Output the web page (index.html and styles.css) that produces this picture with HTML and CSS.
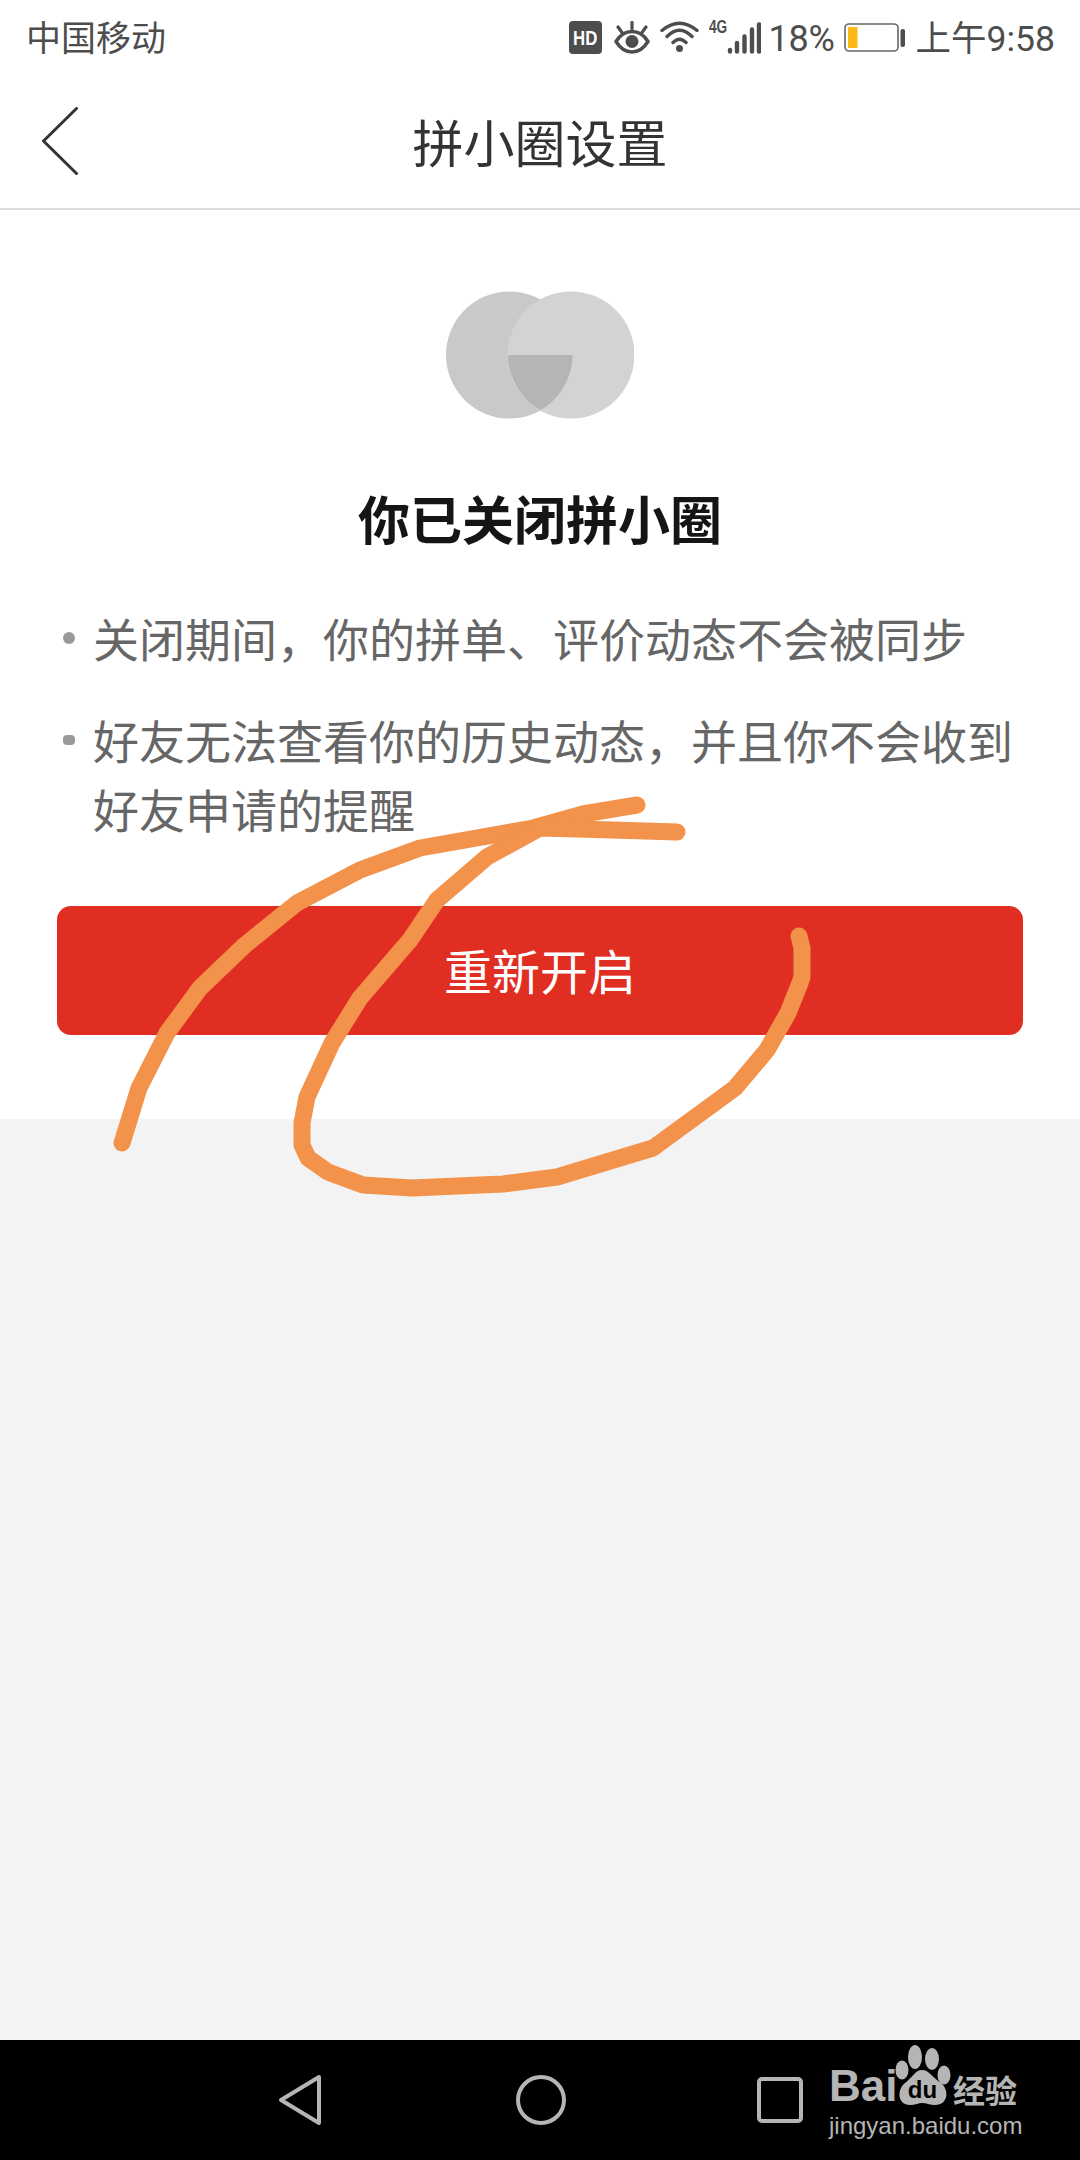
FILE: index.html
```html
<!DOCTYPE html>
<html lang="zh-CN">
<head>
<meta charset="utf-8">
<title>拼小圈设置</title>
<link rel="stylesheet" href="styles.css">
</head>
<body>
<div class="page">
  <header class="status">
    <span class="carrier">中国移动</span>
    <div class="status-right">
      <span class="hd"><span class="hd-text">HD</span></span>
      <svg class="eye" width="36" height="33" viewBox="0 0 36 33">
        <path d="M2 20.500C6 14 11 10.500 18 10.500S30 14 34 20.500C30 27 25 31 18 31S6 27 2 20.500Z" fill="none" stroke="#4d4d4d" stroke-width="3.400"/>
        <circle cx="18" cy="20.500" r="6.500" fill="#4d4d4d"/>
        <path d="M18 1.500v6.500M4 6l4 5.500M32 6l-4 5.500" fill="none" stroke="#4d4d4d" stroke-width="3.200" stroke-linecap="round"/>
      </svg>
      <svg class="wifi" width="39" height="32" viewBox="0 0 39 32">
        <path d="M2 9.500Q19.500 -5 37 9.500M7 15.500Q19.500 3 32 15.500M13 21.500Q19.500 15 26 21.500" fill="none" stroke="#4d4d4d" stroke-width="3.400" stroke-linecap="round"/>
        <circle cx="19.500" cy="27.500" r="3.500" fill="#4d4d4d"/>
      </svg>
      <div class="net">
        <span class="g4">4G</span>
        <svg class="bars" width="34" height="32" viewBox="0 0 34 32">
          <path d="M3 28v1.500M10 21v8.500M17.500 14.500v15M25 7.500v22M32 2.500v27" fill="none" stroke="#4d4d4d" stroke-width="4.400" stroke-linecap="round"/>
        </svg>
      </div>
      <span class="pct">18%</span>
      <svg class="batt" width="61" height="29" viewBox="0 0 61 29">
        <rect x="1" y="1" width="53" height="27" rx="4" fill="none" stroke="#666" stroke-width="1.600"/>
        <rect x="4" y="4" width="9.500" height="21" fill="#fdb913"/>
        <rect x="56.500" y="6" width="4.500" height="18" rx="2" fill="#4d4d4d"/>
      </svg>
      <span class="time">上午9:58</span>
    </div>
  </header>
  <nav class="nav">
    <svg class="back" width="36" height="68" viewBox="0 0 36 68">
      <path d="M34.500 1.500L1.500 34L34.500 66.500" fill="none" stroke="#333" stroke-width="3" stroke-linecap="round" stroke-linejoin="round"/>
    </svg>
    <h1 class="nav-title">拼小圈设置</h1>
  </nav>
  <main class="card">
    <svg class="logo" width="188" height="130" viewBox="0 0 188 130">
      <circle cx="63.500" cy="65" r="63.500" fill="#c9c9c9"/>
      <circle cx="125" cy="65" r="63.500" fill="#d3d3d3"/>
      <path d="M62 65H126.500C126.500 88 113 110 94.300 120C76 110 62 88 62 65Z" fill="#b5b5b5"/>
    </svg>
    <h2 class="headline">你已关闭拼小圈</h2>
    <ul class="notes">
      <li class="note"><i class="dot"></i><span>关闭期间，你的拼单、评价动态不会被同步</span></li>
      <li class="note"><i class="dot dot-flat"></i><span>好友无法查看你的历史动态，并且你不会收到好友申请的提醒</span></li>
    </ul>
    <button class="cta">重新开启</button>
  </main>
  <div class="filler"></div>
  <footer class="sysnav">
    <svg class="sys-back" width="44" height="52" viewBox="0 0 44 52">
      <path d="M41 3L3 26L41 49Z" fill="none" stroke="#b5b5b5" stroke-width="4" stroke-linejoin="round"/>
    </svg>
    <svg class="sys-home" width="50" height="50" viewBox="0 0 50 50">
      <circle cx="25" cy="25" r="23" fill="none" stroke="#b5b5b5" stroke-width="4"/>
    </svg>
    <svg class="sys-recent" width="46" height="46" viewBox="0 0 46 46">
      <rect x="2" y="2" width="42" height="42" rx="3" fill="none" stroke="#b5b5b5" stroke-width="4"/>
    </svg>
  </footer>
</div>
<svg class="scribble" width="1080" height="2160" viewBox="0 0 1080 2160">
  <path d="M122 1143L139 1088L167 1033L200 988L245 945L297 903L360 870L420 848L533 828L583 814L637 805" />
  <path d="M677 832L612 830L540 828L487 857L437 900L410 940L360 998L332 1043L307 1097L302 1123L302 1145L308 1158L328 1172L363 1185L412 1188L503 1184L557 1177L653 1148L735 1088L767 1050L788 1013L800 983L802 977L802 948L799 936" />
</svg>
<div class="mark">
  <div class="mark-top">
    <span class="mark-bai">Bai</span>
    <svg class="mark-paw" width="56" height="61" viewBox="0 0 56 61">
      <ellipse cx="20" cy="12" rx="7" ry="12" fill="#b5b5b5"/>
      <ellipse cx="37" cy="14" rx="7" ry="11" fill="#b5b5b5"/>
      <ellipse cx="7" cy="25" rx="6.500" ry="9.500" fill="#b5b5b5"/>
      <ellipse cx="49" cy="30" rx="6.500" ry="9.500" fill="#b5b5b5"/>
      <path d="M27 25C20 25 17 33 10 38C2 44 2 60 15 60C20 60 24 58 27 58C31 58 35 60 40 60C54 60 54 44 46 38C38 33 34 25 27 25Z" fill="#b5b5b5"/>
      <text x="27.500" y="53" text-anchor="middle" class="mark-du">du</text>
    </svg>
    <span class="mark-cn">经验</span>
  </div>
  <div class="mark-url">jingyan.baidu.com</div>
</div>
</body>
</html>
```

FILE: styles.css
```css
* { box-sizing: border-box; }
html, body { margin: 0; padding: 0; background: #f3f3f3; }
body { font-family: "Noto Sans CJK SC", "Noto Sans", sans-serif; }
.page { display: flex; flex-direction: column; height: 2160px; width: 1080px; }

.status { height: 70px; background: #fff; display: flex; align-items: center; justify-content: space-between; padding: 4px 25px 0 26px; color: #4d4d4d; }
.carrier { font-size: 35px; line-height: 40px; margin-top: -2px; }
.status-right { display: flex; align-items: center; height: 40px; }
.hd { width: 33px; height: 33px; background: #4d4d4d; color: #fff; border-radius: 4px; display: flex; align-items: center; justify-content: center; margin-right: 12px; }
.hd-text { display: block; font: bold 21px/33px "Liberation Sans", sans-serif; transform: scaleX(.8); }
.eye { margin-right: 10px; }
.wifi { margin-right: 10px; }
.net { display: flex; align-items: flex-end; height: 33px; position: relative; width: 52px; margin-right: 8px; justify-content: flex-end; }
.g4 { position: absolute; left: 0; top: -3px; font: bold 19px/18px "Liberation Sans", sans-serif; transform: scaleX(.72); transform-origin: left top; }
.pct { font: 36px/40px Roboto, sans-serif; margin: 4px 9px 0 0; letter-spacing: -.3px; }
.batt { margin-right: 11px; }
.time { font-size: 35.500px; line-height: 40px; font-family: Roboto, "Noto Sans CJK SC", sans-serif; margin-top: 4px; }

.nav { height: 140px; background: #fff; border-bottom: 2px solid #dcdcdc; display: flex; align-items: center; justify-content: center; position: relative; }
.back { position: absolute; left: 42px; top: 37px; }
.nav-title { margin: 0; padding-top: 3px; font-size: 51px; font-weight: 400; color: #333; line-height: 70px; }

.card { background: #fff; height: 909px; padding: 80px 57px 0; display: flex; flex-direction: column; align-items: center; }
.logo { display: block; }
.headline { margin: 58px 0 0; font-size: 52px; line-height: 80px; font-weight: 700; color: #151515; }
.notes { list-style: none; margin: 45px 0 0; padding: 0; width: 100%; }
.note { display: flex; font-size: 46px; line-height: 69px; color: #666; margin-top: 33px; }
.note:first-child { margin-top: 0; }
.dot { flex: none; width: 12px; height: 12px; border-radius: 50%; background: #999; margin: 29px 18px 0 6px; }
.dot-flat { height: 10px; border-radius: 4px; margin-top: 30px; }
.note span { flex: 1; }
.cta { margin-top: 63px; width: 966px; height: 129px; border: 0; border-radius: 14px; padding: 0 0 4px; background: #e12e23; color: #fff; font: 400 48px/1 "Noto Sans CJK SC", sans-serif; }

.filler { flex: 1; background: #f3f3f3; }

.sysnav { height: 120px; background: #000; position: relative; display: flex; align-items: flex-start; padding: 34px 0 0 278px; }
.sys-home { margin: 1px 0 0 194px; }
.sys-recent { margin: 3px 0 0 191px; }

.scribble { position: absolute; left: 0; top: 0; pointer-events: none; }
.scribble path { fill: none; stroke: #f3924b; stroke-width: 17; stroke-linecap: round; stroke-linejoin: round; }

.mark { position: absolute; left: 829px; top: 2045px; width: 192px; color: #b5b5b5; }
.mark-top { display: flex; align-items: flex-end; height: 61px; }
.mark-bai { font: 700 44px/46px "Liberation Sans", sans-serif; width: 66px; margin-bottom: -3px; flex: none; }
.mark-paw { flex: none; }
.mark-du { font: 700 24px "Liberation Sans", sans-serif; fill: #000; }
.mark-cn { font-size: 32px; font-weight: 700; line-height: 36px; margin: 0 0 -1px 2px; white-space: nowrap; }
.mark-url { font: 400 24px/28px "Liberation Sans", sans-serif; margin-top: 6px; white-space: nowrap; }
```
